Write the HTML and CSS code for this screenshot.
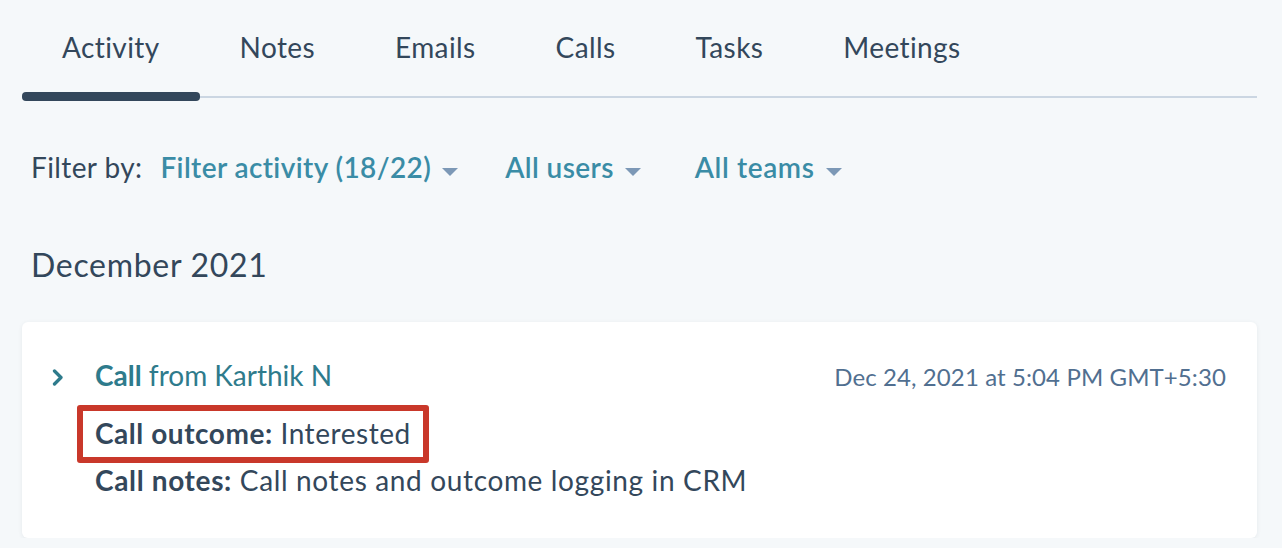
FILE: index.html
```html
<!DOCTYPE html>
<html lang="en">
<head>
<meta charset="utf-8">
<title>Activity</title>
<link rel="stylesheet" href="styles.css">
</head>
<body>
<div class="page">
  <nav class="tabs">
    <div class="tab active">Activity</div>
    <div class="tab">Notes</div>
    <div class="tab">Emails</div>
    <div class="tab">Calls</div>
    <div class="tab">Tasks</div>
    <div class="tab">Meetings</div>
  </nav>

  <div class="filters">
    <span class="filter-label">Filter by:</span>
    <span class="filter">Filter activity (18/22)<span class="caret"></span></span>
    <span class="filter">All users<span class="caret"></span></span>
    <span class="filter">All teams<span class="caret"></span></span>
  </div>

  <h2 class="month">December 2021</h2>

  <div class="card">
    <div class="card-head">
      <svg class="chevron" width="12" height="17" viewBox="0 0 12 17"><path d="M2.5 2 L9 8.5 L2.5 15" fill="none" stroke="#2e7b8c" stroke-width="3.3" stroke-linecap="round" stroke-linejoin="round"/></svg>
      <div class="title"><b>Call</b> from Karthik N</div>
      <div class="date">Dec 24, 2021 at 5:04 PM GMT+5:30</div>
    </div>
    <div class="card-body">
      <div class="outcome"><b>Call outcome:</b> Interested</div>
      <div class="notes"><b>Call notes:</b> Call notes and outcome logging in CRM</div>
    </div>
  </div>
</div>
</body>
</html>
```

FILE: styles.css
```css
html, body {
  margin: 0;
  padding: 0;
  background: #f5f8fa;
}
body {
  font-family: "Lato", "Noto Sans", sans-serif;
  color: #33475b;
}
.page {
  padding: 0 25px 0 22px;
}
.tabs {
  display: flex;
  padding-top: 24px;
  border-bottom: 2px solid #cbd6e2;
}
.tab {
  position: relative;
  padding: 0 40px 26px 40px;
  font-size: 28px;
  line-height: 46px;
  letter-spacing: 0.4px;
  color: #33475b;
}
.tab.active::after {
  content: "";
  position: absolute;
  left: 0;
  right: 0;
  bottom: -5px;
  height: 9px;
  border-radius: 4px;
  background: #33475b;
}
.filters {
  display: flex;
  align-items: center;
  padding: 49px 0 0 9px;
  font-size: 28px;
  line-height: 40px;
  letter-spacing: 0.4px;
}
.filter-label {
  margin-right: 18px;
}
.filter {
  display: inline-flex;
  align-items: center;
  color: #3a8ca6;
  font-weight: 600;
  margin-right: 47px;
}
.filter:last-child {
  margin-left: 7px;
  letter-spacing: 0.6px;
}
.caret {
  width: 0;
  height: 0;
  margin-left: 11px;
  margin-top: 9px;
  border-left: 8px solid transparent;
  border-right: 8px solid transparent;
  border-top: 8px solid #7c98b6;
}
.month {
  margin: 0;
  padding: 56px 0 0 9px;
  font-size: 32px;
  line-height: 44px;
  font-weight: 400;
  letter-spacing: 0.7px;
}
.card {
  margin-top: 35px;
  background: #fff;
  border-radius: 6px;
  box-shadow: 0 1px 4px rgba(45, 62, 80, 0.08);
  padding: 36px 31px 41px 30px;
}
.card-head {
  display: flex;
  align-items: baseline;
  font-size: 28px;
  line-height: 34px;
}
.chevron {
  flex: none;
  margin-right: 31px;
}
.title {
  color: #2e7b8c;
  flex: 1;
}
.title b {
  font-weight: 700;
}
.date {
  font-size: 24px;
  letter-spacing: 0.1px;
  color: #516f90;
}
.card-body {
  padding-left: 43px;
  font-size: 28px;
  line-height: 34px;
  letter-spacing: 0.55px;
}
.outcome {
  display: inline-block;
  margin: 11px 0 0 -18px;
  padding: 5px 12px 7px 12px;
  border: 6px solid #c9382a;
  border-radius: 3px;
}
.notes {
  margin-top: 0;
  letter-spacing: 0.65px;
}
.card-body b {
  font-weight: 700;
}
```
